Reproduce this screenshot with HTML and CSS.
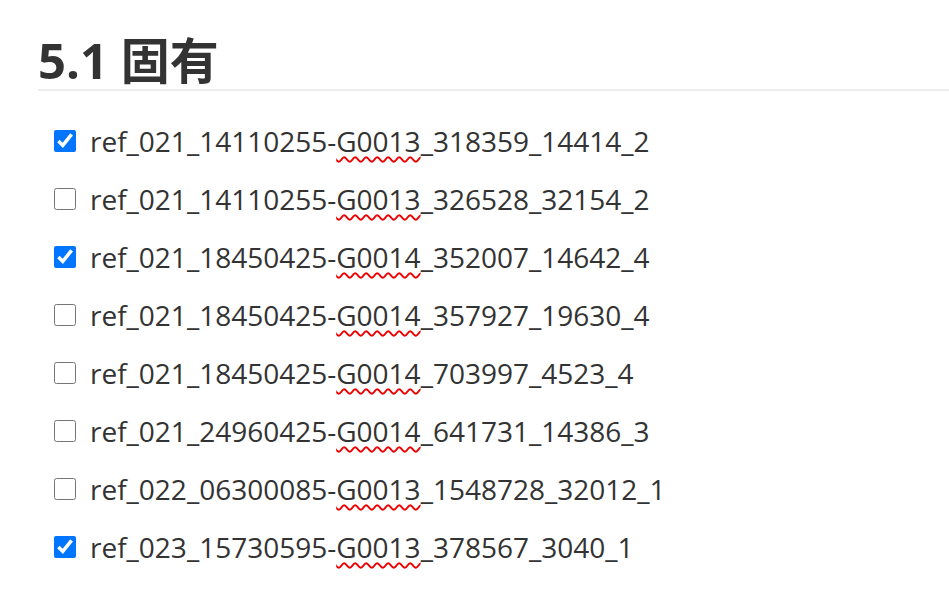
FILE: index.html
```html
<!DOCTYPE html>
<html lang="zh">
<head>
<meta charset="utf-8">
<link rel="stylesheet" href="styles.css">
</head>
<body>
<main class="page">
  <h2 class="title">5.1 固有</h2>
  <ul class="list">
    <li class="item"><input type="checkbox" checked><span>ref_021_14110255-<span class="sp">G0013</span>_318359_14414_2</span></li>
    <li class="item"><input type="checkbox"><span>ref_021_14110255-<span class="sp">G0013</span>_326528_32154_2</span></li>
    <li class="item"><input type="checkbox" checked><span>ref_021_18450425-<span class="sp">G0014</span>_352007_14642_4</span></li>
    <li class="item"><input type="checkbox"><span>ref_021_18450425-<span class="sp">G0014</span>_357927_19630_4</span></li>
    <li class="item"><input type="checkbox"><span>ref_021_18450425-<span class="sp">G0014</span>_703997_4523_4</span></li>
    <li class="item"><input type="checkbox"><span>ref_021_24960425-<span class="sp">G0014</span>_641731_14386_3</span></li>
    <li class="item"><input type="checkbox"><span>ref_022_06300085-<span class="sp">G0013</span>_1548728_32012_1</span></li>
    <li class="item"><input type="checkbox" checked><span>ref_023_15730595-<span class="sp">G0013</span>_378567_3040_1</span></li>
  </ul>
</main>
</body>
</html>
```
FILE: styles.css
```css
html, body {
  margin: 0;
  padding: 0;
  background: #fff;
}
body {
  font-family: "Open Sans", "Noto Sans CJK SC", sans-serif;
  color: #333;
}
.page {
  padding: 31px 0 0 38px;
}
.title {
  margin: 0;
  font-size: 49px;
  font-weight: 700;
  line-height: 58px;
  color: #333;
  border-bottom: 2px solid #eee;
  padding-bottom: 0;
}
.list {
  list-style: none;
  margin: 0;
  padding: 21px 0 0 16px;
}
.item {
  display: flex;
  align-items: center;
  gap: 14px;
  height: 58px;
  font-size: 28px;
}
.item input {
  width: 22px;
  height: 22px;
  margin: 0;
  accent-color: #0075ff;
}
.sp {
  text-decoration: underline wavy #e00;
  text-decoration-thickness: 1.5px;
  text-underline-offset: 4px;
}
```
